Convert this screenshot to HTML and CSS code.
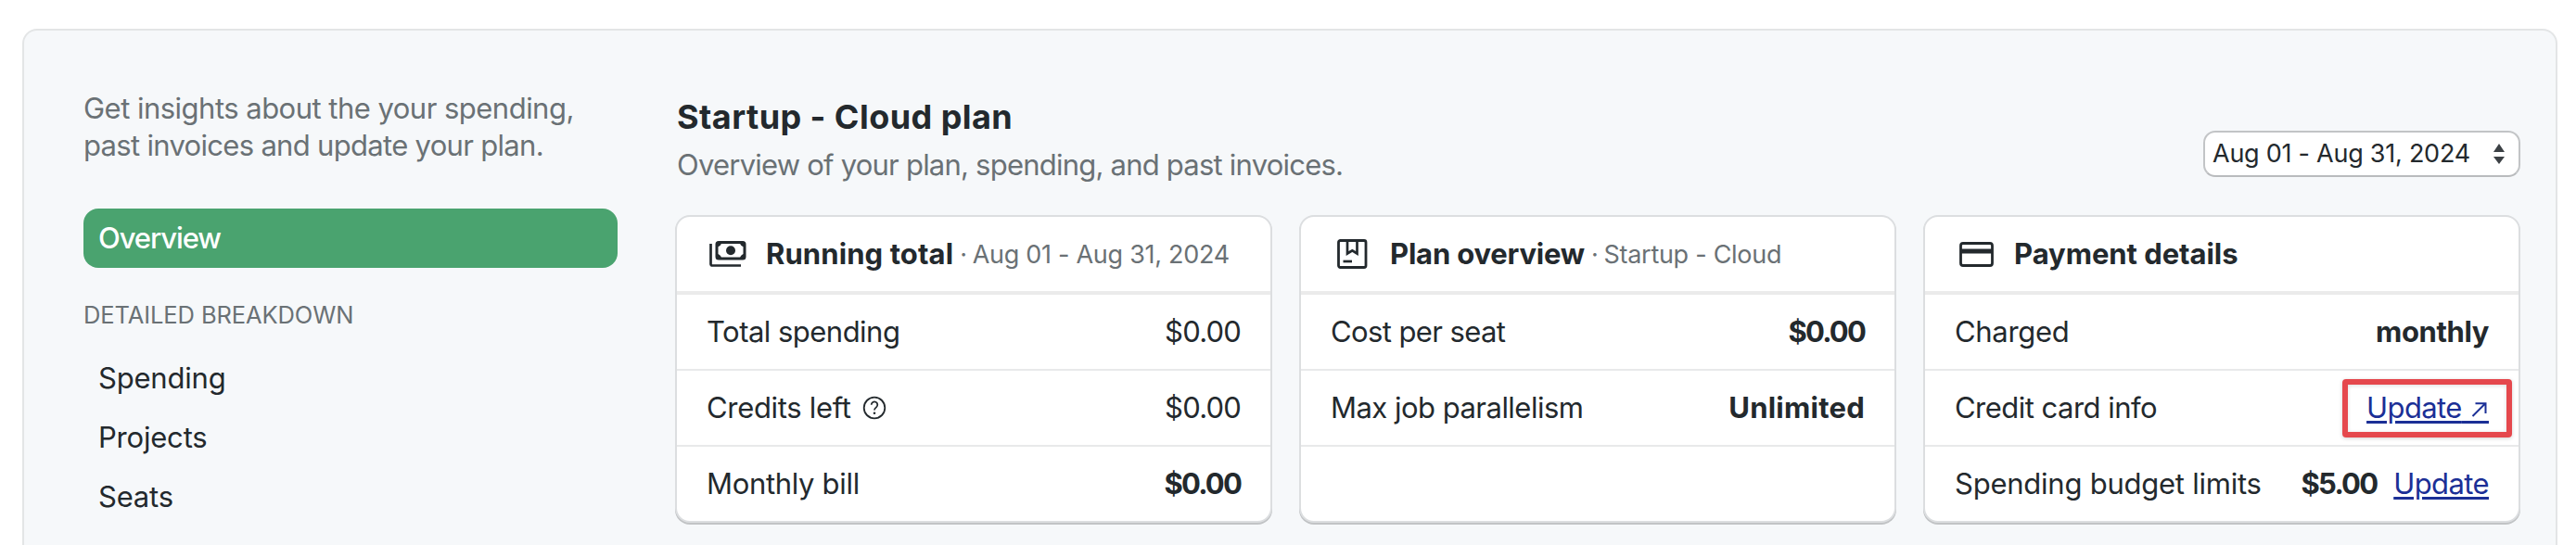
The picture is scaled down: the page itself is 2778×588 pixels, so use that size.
FILE: index.html
```html
<!DOCTYPE html>
<html lang="en">
<head>
<meta charset="utf-8">
<title>Startup - Cloud plan</title>
<link rel="stylesheet" href="styles.css">
</head>
<body>
<div class="panel">
  <aside class="sidebar">
    <p class="intro"><span class="intro-first">Get insights about the your spending,</span><br><span class="intro-second">past invoices and update your plan.</span></p>
    <nav class="nav">
      <a class="nav-item active">Overview</a>
      <h2 class="nav-label">DETAILED BREAKDOWN</h2>
      <a class="nav-item">Spending</a>
      <a class="nav-item">Projects</a>
      <a class="nav-item">Seats</a>
    </nav>
  </aside>
  <main class="main">
    <header class="top">
      <div class="heading">
        <h1 class="title">Startup - Cloud plan</h1>
        <p class="subtitle">Overview of your plan, spending, and past invoices.</p>
      </div>
      <div class="select">
        <span class="select-text">Aug 01 - Aug 31, 2024</span>
        <svg class="select-arrows" width="12" height="24" viewBox="0 0 12 24"><path d="M6 1l6 9H0zM6 23l6-8H0z" fill="#3c4145"/></svg>
      </div>
    </header>
    <div class="cards">
      <section class="card">
        <div class="card-head">
          <svg class="icon" width="42" height="34" viewBox="0 0 42 34">
            <path d="M2.500 6v22a1.500 1.500 0 0 0 1.500 1.500h31" fill="none" stroke="#23292d" stroke-width="2.700"/>
            <rect x="9" y="4.500" width="30" height="17.500" rx="2" fill="none" stroke="#23292d" stroke-width="3"/>
            <path d="M9 9.500a5 5 0 0 0 5-5H9zM39 9.500a5 5 0 0 1-5-5h5zM9 17a5 5 0 0 1 5 5H9zM39 17a5 5 0 0 0-5 5h5z" fill="#23292d"/>
            <circle cx="24" cy="13.300" r="5" fill="#23292d"/>
          </svg>
          <h3 class="card-title">Running total</h3><span class="card-note note-date"><span class="dot">·</span>Aug 01 - Aug 31, 2024</span>
        </div>
        <div class="row"><span class="label">Total spending</span><span class="value">$0.00</span></div>
        <div class="row">
          <span class="label with-help"><span class="credits">Credits left</span>
            <svg width="26" height="26" viewBox="0 0 26 26" fill="none" stroke="#23292d" stroke-width="1.800">
              <circle cx="13" cy="13" r="11.300"/>
              <path d="M9.700 9.800a3.300 3.300 0 1 1 5.300 2.600c-1.300 1-2 1.400-2 3"/>
              <circle cx="13" cy="18.800" r="1.300" fill="#23292d" stroke="none"/>
            </svg>
          </span>
          <span class="value">$0.00</span>
        </div>
        <div class="row"><span class="label monthly-bill">Monthly bill</span><span class="value strong amount">$0.00</span></div>
      </section>
      <section class="card">
        <div class="card-head">
          <svg class="icon" width="42" height="34" viewBox="0 0 42 34">
            <rect x="6.500" y="2.500" width="29.500" height="29" rx="2" fill="none" stroke="#23292d" stroke-width="2.800"/>
            <path d="M16 3v13.500l5.300-3.200 5.200 3.200V3" fill="none" stroke="#23292d" stroke-width="2.700"/>
            <path d="M11.500 25h9.500" stroke="#23292d" stroke-width="2.700"/>
          </svg>
          <h3 class="card-title plan-title">Plan overview</h3><span class="card-note"><span class="dot">·</span>Startup - Cloud</span>
        </div>
        <div class="row"><span class="label cost">Cost per seat</span><span class="value strong amount">$0.00</span></div>
        <div class="row"><span class="label">Max job parallelism</span><span class="value strong unlimited">Unlimited</span></div>
        <div class="row"></div>
      </section>
      <section class="card">
        <div class="card-head">
          <svg class="icon" width="42" height="34" viewBox="0 0 42 34">
            <rect x="4.500" y="5.500" width="34" height="24" rx="2.500" fill="none" stroke="#23292d" stroke-width="2.800"/>
            <path d="M4 14h35" stroke="#23292d" stroke-width="5"/>
          </svg>
          <h3 class="card-title payment-title">Payment details</h3>
        </div>
        <div class="row"><span class="label charged">Charged</span><span class="value strong period">monthly</span></div>
        <div class="row">
          <span class="label">Credit card info</span>
          <a class="link highlighted">Update<span class="ext-space">&nbsp;&nbsp;&nbsp;</span><svg class="ext" width="18" height="18" viewBox="0 0 18 18"><path d="M1.500 16L15 2.500M4.500 2.200h11V13" fill="none" stroke="#1b2f96" stroke-width="2"/></svg></a>
        </div>
        <div class="row">
          <span class="label budget">Spending budget limits</span>
          <span class="pair"><span class="value strong amount">$5.00</span><a class="link">Update</a></span>
        </div>
      </section>
    </div>
  </main>
</div>
</body>
</html>
```

FILE: styles.css
```css
* { box-sizing: border-box; }
html { overflow: hidden; }
body {
  margin: 0;
  height: 588px;
  overflow: hidden;
  padding: 31px 20px 0 24px;
  background: #fff;
  color: #23292d;
  font: 400 31px/40px Inter, "Liberation Sans", sans-serif;
}
h1, h2, h3, p { margin: 0; }
.panel {
  display: flex;
  height: 557px;
  padding: 63px 38px 0 64px;
  border: 2px solid #e3e5e6;
  border-bottom: 0;
  border-radius: 16px 16px 0 0;
  background: #f6f8fa;
}
.sidebar { width: 576px; flex: none; margin-right: 62px; padding-top: 1px; }
.intro { color: #6a7175; }
.intro-first { letter-spacing: -.52px; }
.intro-second { letter-spacing: -.69px; }
.nav { display: flex; flex-direction: column; margin-top: 48px; }
.nav-item {
  height: 64px;
  padding: 0 16px;
  line-height: 64px;
  letter-spacing: -.2px;
}
.active {
  border-radius: 16px;
  background: #4aa36f;
  color: #fff;
  font-weight: 500;
  letter-spacing: -1.1px;
}
.nav-label {
  height: 87px;
  line-height: 101px;
  color: #6a7175;
  font-size: 25.500px;
  font-weight: 400;
  letter-spacing: -.1px;
}
.main { flex: 1; }
.top {
  display: flex;
  justify-content: space-between;
  align-items: flex-end;
  height: 95px;
}
.title { margin-top: 8px; font-size: 36px; line-height: 44px; font-weight: 700; letter-spacing: .45px; padding-left: 2px; }
.subtitle { margin-top: 10px; padding-left: 2px; color: #6a7175; letter-spacing: -.78px; }
.heading { align-self: flex-start; }
.select {
  display: flex;
  align-items: center;
  justify-content: space-between;
  width: 342px;
  height: 50px;
  padding: 0 15px 0 8px;
  border: 2px solid #c2c4c6;
  border-bottom-color: #b9bbbd;
  border-radius: 13px;
  background: #fff;
  font-size: 27px;
  letter-spacing: -.25px;
}
.cards {
  display: grid;
  grid-template-columns: repeat(3, 1fr);
  gap: 29px;
  margin-top: 41px;
}
.card {
  height: 332px;
  border: 2px solid #dcdee0;
  border-radius: 16px;
  background: #fff;
  box-shadow: 0 2px 0 #c1c3c5;
}
.card-head {
  display: flex;
  align-items: center;
  height: 84px;
  padding-left: 34px;
  border-bottom: 4px solid #ebebeb;
}
.icon { flex: none; margin-right: 20px; }
.card-title { font-size: 31px; font-weight: 700; letter-spacing: .1px; }
.plan-title { letter-spacing: -.2px; }
.payment-title { letter-spacing: -.05px; }
.card-note { padding-top: 2px; color: #6a7175; font-size: 27px; letter-spacing: -.28px; }
.dot { padding: 0 6px 0 7px; }
.row {
  display: flex;
  justify-content: space-between;
  align-items: center;
  height: 82px;
  padding: 0 32px;
  border-bottom: 2px solid #e8e9ea;
}
.row:last-child { border-bottom: 0; height: 80px; }
.label { letter-spacing: -.52px; }
.credits, .monthly-bill, .charged { letter-spacing: -.32px; }
.cost { letter-spacing: -.6px; }
.budget { letter-spacing: -.24px; }
.with-help { display: flex; align-items: center; gap: 12px; }
.value { letter-spacing: -.8px; }
.strong { font-weight: 700; letter-spacing: 0; }
.amount { letter-spacing: -1.8px; }
.unlimited { letter-spacing: .25px; }
.period { letter-spacing: -.4px; }
.pair { display: flex; gap: 18px; }
.link {
  color: #1b2f96;
  letter-spacing: -.6px;
  text-decoration: underline;
  text-decoration-thickness: 3px;
  text-underline-offset: 3px;
}
.highlighted { position: relative; height: 40px; }
.ext-space { letter-spacing: 1px; }
.ext { position: absolute; right: 1px; top: 13px; }
/* red callout drawn around the link */
.highlighted::after {
  content: "";
  position: absolute;
  inset: -11px -25px -12px -26px;
  border: 6px solid #e5484d;
  border-radius: 4px;
  box-shadow: 0 1px 4px rgba(0, 0, 0, .18), inset 0 1px 4px rgba(0, 0, 0, .14);
}
```
